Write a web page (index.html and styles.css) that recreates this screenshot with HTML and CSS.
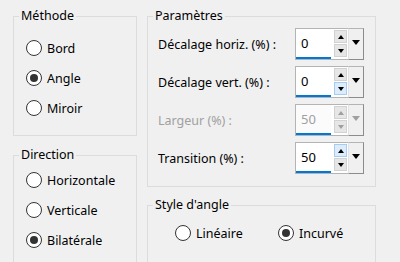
FILE: index.html
```html
<!DOCTYPE html>
<html lang="fr">
  <head>
    <meta charset="UTF-8" />
    <title>Angle</title>
    <link rel="stylesheet" href="styles.css">
  </head>
  <body>
    <div class="dialog">
      <div class="col col-left">
        <!-- Méthode -->
        <fieldset class="group">
          <legend>Méthode</legend>
          <div class="group-body body-methode">
            <div class="radio-row"><span class="radio-mark"></span>Bord</div>
            <div class="radio-row"><span class="radio-mark checked"></span>Angle</div>
            <div class="radio-row"><span class="radio-mark"></span>Miroir</div>
          </div>
        </fieldset>

        <!-- Direction -->
        <fieldset class="group">
          <legend>Direction</legend>
          <div class="group-body body-direction">
            <div class="radio-row"><span class="radio-mark"></span>Horizontale</div>
            <div class="radio-row"><span class="radio-mark"></span>Verticale</div>
            <div class="radio-row"><span class="radio-mark checked"></span>Bilatérale</div>
          </div>
        </fieldset>
      </div>

      <div class="col col-right">
        <!-- Paramètres -->
        <fieldset class="group">
          <legend>Paramètres</legend>
          <div class="group-body body-params">
            <div class="param-row">
              <span class="param-label">Décalage horiz. (%) :</span>
              <div class="spin">
                <div class="spin-box">
                  <div class="spin-edit">0</div>
                  <div class="spin-btns">
                    <span class="spin-btn"><i class="tri-up"></i></span>
                    <span class="spin-btn"><i class="tri-down"></i></span>
                  </div>
                </div>
                <div class="spin-drop"><i class="tri-drop"></i></div>
              </div>
            </div>
            <div class="param-row">
              <span class="param-label">Décalage vert. (%) :</span>
              <div class="spin">
                <div class="spin-box">
                  <div class="spin-edit">0</div>
                  <div class="spin-btns">
                    <span class="spin-btn"><i class="tri-up"></i></span>
                    <span class="spin-btn hot"><i class="tri-down"></i></span>
                  </div>
                </div>
                <div class="spin-drop"><i class="tri-drop"></i></div>
              </div>
            </div>
            <div class="param-row disabled">
              <span class="param-label">Largeur (%) :</span>
              <div class="spin">
                <div class="spin-box">
                  <div class="spin-edit">50</div>
                  <div class="spin-btns">
                    <span class="spin-btn"><i class="tri-up"></i></span>
                    <span class="spin-btn"><i class="tri-down"></i></span>
                  </div>
                </div>
                <div class="spin-drop"><i class="tri-drop"></i></div>
              </div>
            </div>
            <div class="param-row">
              <span class="param-label">Transition (%) :</span>
              <div class="spin">
                <div class="spin-box">
                  <div class="spin-edit">50</div>
                  <div class="spin-btns">
                    <span class="spin-btn hot"><i class="tri-up"></i></span>
                    <span class="spin-btn"><i class="tri-down"></i></span>
                  </div>
                </div>
                <div class="spin-drop"><i class="tri-drop"></i></div>
              </div>
            </div>
          </div>
        </fieldset>

        <!-- Style d'angle -->
        <fieldset class="group">
          <legend>Style d'angle</legend>
          <div class="group-body body-style">
            <div class="radio-row style-item"><span class="radio-mark"></span>Linéaire</div>
            <div class="radio-row"><span class="radio-mark checked"></span>Incurvé</div>
          </div>
        </fieldset>
      </div>
    </div>
  </body>
</html>
```

FILE: styles.css
```css
body {
  margin: 0;
  background: #f0f0f0;
  font-family: "Noto Sans", "Open Sans", sans-serif;
  font-size: 12.5px;
  color: #000;
  overflow: hidden;
}

.dialog {
  display: flex;
  gap: 10px;
  padding: 8px 0 0 13px;
}

.col {
  display: flex;
  flex-direction: column;
}

.col-left {
  width: 124px;
  gap: 11px;
}

.col-right {
  width: 229px;
  gap: 10px;
}

/* group box */
.group {
  margin: 0;
  padding: 0;
  min-width: 0;
  border: 1px solid #dcdcdc;
}

.group legend {
  margin-left: 5px;
  padding: 0 2px;
  height: 16px;
  line-height: 16px;
}

.body-methode {
  padding: 9px 0 12px 12px;
}

.body-direction {
  padding: 2px 0 20px 12px;
}

.body-params {
  padding: 4px 10px 12px 10px;
  display: flex;
  flex-direction: column;
  gap: 6px;
}

.body-style {
  display: flex;
  padding: 5px 0 30px 27px;
}

/* radio buttons */
.radio-row {
  display: flex;
  align-items: center;
  height: 30px;
}

.radio-mark {
  position: relative;
  width: 14px;
  height: 14px;
  margin-right: 5px;
  border: 1px solid #333;
  border-radius: 50%;
  background: #fff;
}

.radio-mark.checked::after {
  content: "";
  position: absolute;
  left: 3px;
  top: 3px;
  width: 8px;
  height: 8px;
  border-radius: 50%;
  background: #333;
}

.style-item {
  width: 103px;
}

/* parameter rows */
.param-row {
  display: flex;
  align-items: center;
  height: 32px;
}

.param-label {
  width: 137px;
}

.disabled .param-label,
.disabled .spin-edit {
  color: #a0a0a0;
}

/* spin box */
.spin {
  display: flex;
  width: 70px;
  height: 32px;
}

.spin-box {
  display: flex;
  width: 52px;
  background: #fff;
  border: 1px solid #b4b4b4;
  border-right: none;
}

.spin-edit {
  width: 30px;
  padding-left: 5px;
  line-height: 28px;
  border-bottom: 2px solid #0078d7;
  font-size: 13px;
}

.disabled .spin-edit {
  background: #fbfbfb;
}

.spin-btns {
  display: flex;
  flex-direction: column;
  gap: 1px;
  margin: 1px 0 2px 3px;
  width: 13px;
}

.spin-btn {
  flex: 1;
  display: flex;
  align-items: center;
  justify-content: center;
  background: #e6e6e6;
  border: 1px solid #d2d2d2;
}

.spin-btn.hot {
  background: #dcecfc;
  border-color: #a6cdf1;
}

.spin-drop {
  width: 16px;
  display: flex;
  justify-content: center;
  padding-top: 11px;
  box-sizing: border-box;
  border-top: 1px solid #b4b4b4;
  border-right: 1px solid #8c8c8c;
  border-bottom: 1px solid #8c8c8c;
  border-left: 1px solid #e3e3e3;
}

.tri-up,
.tri-down,
.tri-drop {
  width: 0;
  height: 0;
  border-left: 3.5px solid transparent;
  border-right: 3.5px solid transparent;
}

.tri-up {
  border-bottom: 4px solid #000;
}

.tri-down {
  border-top: 4px solid #000;
}

.tri-drop {
  border-left-width: 4.5px;
  border-right-width: 4.5px;
  border-top: 5px solid #000;
}

.disabled .tri-up {
  border-bottom-color: #a0a0a0;
}

.disabled .tri-down,
.disabled .tri-drop {
  border-top-color: #a0a0a0;
}
```
